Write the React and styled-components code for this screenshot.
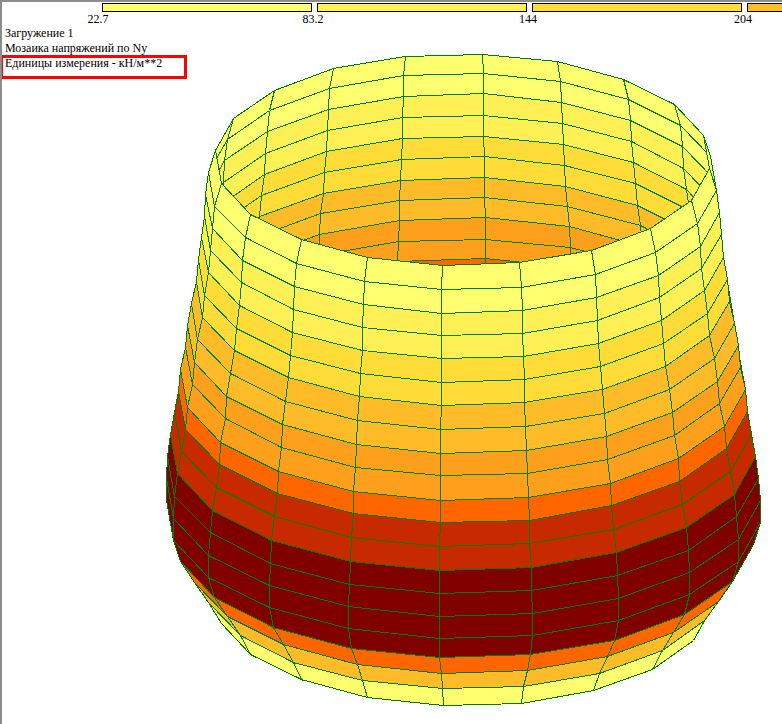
import React from 'react'
import styled, { createGlobalStyle } from 'styled-components'

const GlobalStyle = createGlobalStyle`
  html, body { margin: 0; padding: 0; background: #fff; }
`

const Y1 = '#ffff70'
const Y2 = '#fff055'
const GOLD = '#ffdc38'
const AMBER = '#ffbc28'
const ORANGE = '#ffa01c'
const HOT = '#ff6600'
const RED = '#c82a00'
const DARK = '#800000'

// colour of each ring of elements, top to bottom
const BANDS = [Y1, Y1, Y2, Y2, GOLD, GOLD, AMBER, AMBER, ORANGE, ORANGE, HOT, RED, RED, DARK, DARK, DARK, DARK, HOT, AMBER, Y1]
// shell radius of each ring, top one = 1
const RADII = [1, 1.028, 1.039, 1.046, 1.056, 1.07, 1.08, 1.1, 1.115, 1.123, 1.144, 1.151, 1.167, 1.185, 1.196, 1.203, 1.203, 1.175, 1.115, 1.056, 1.005]
const SIDES = 20

const project = (ring, side) => {
  const a = (side * 2 * Math.PI) / SIDES
  const s = RADII[ring]
  return [
    462 + 0.05 * ring + s * (-20 * Math.cos(a) - 247 * Math.sin(a)),
    159 + 22 * ring + s * (105.5 * Math.cos(a) - 9 * Math.sin(a)),
  ]
}

const buildFacets = () => {
  const list = []
  for (let r = 0; r < BANDS.length; r++) {
    for (let i = 0; i < SIDES; i++) {
      const corners = [project(r, i), project(r, i + 1), project(r + 1, i + 1), project(r + 1, i)]
      const mid = ((i + 0.5) * 2 * Math.PI) / SIDES
      list.push({
        key: `${r}-${i}`,
        fill: BANDS[r],
        depth: 223 * RADII[r] * Math.cos(mid) - 10.4 * r,
        points: corners.map(([x, y]) => `${Math.round(x) + 0.5},${Math.round(y) + 0.5}`).join(' '),
      })
    }
  }
  return list.sort((a, b) => a.depth - b.depth)
}

const Frame = styled.div`
  width: 780px;
  height: 722px;
  overflow: hidden;
  border-top: 2px solid #8c8c8c;
  border-left: 2px solid #8c8c8c;
  background: #fff;
  color: #000;
  font-family: "Liberation Serif", "Times New Roman", serif;
  font-size: 12px;
`

const LegendBars = styled.div`
  display: flex;
  gap: 5px;
  margin: 1px 0 0 100px;
  width: 680px;
  overflow: hidden;
`

const LegendBar = styled.div`
  flex: 0 0 210px;
  box-sizing: border-box;
  height: 9px;
  border: 1px solid #000;
  background: ${(p) => p.$color};
`

const LegendLabels = styled.div`
  display: flex;
  gap: 175px;
  margin-left: 76px;
  height: 14px;
  line-height: 14px;
`

const LegendLabel = styled.span`
  flex: 0 0 40px;
  text-align: center;
`

const Plot = styled.div`
  display: grid;
  position: relative;
  & > * { grid-area: 1 / 1; }
`

const Chart = styled.svg`
  display: block;
  width: 780px;
  height: 698px;
`

const Facet = styled.polygon`
  fill: ${(p) => p.$fill};
  stroke: #008000;
  stroke-width: 1;
  shape-rendering: crispEdges;
`

const Caption = styled.div`
  padding: 0 0 0 3px;
  align-self: start;
  z-index: 1;
`

const CaptionLine = styled.div`
  height: 15px;
  line-height: 15px;
  white-space: nowrap;
`

const Highlight = styled.div`
  position: absolute;
  left: -2px;
  top: 29px;
  width: 187px;
  height: 24px;
  box-sizing: border-box;
  border: 3px solid #ff0000;
  z-index: 2;
`

const App = () => {
  const facets = buildFacets()
  return (
    <Frame>
      <GlobalStyle />
      <LegendBars>
        <LegendBar $color={Y1} />
        <LegendBar $color={Y2} />
        <LegendBar $color={GOLD} />
        <LegendBar $color={AMBER} />
      </LegendBars>
      <LegendLabels>
        <LegendLabel>22.7</LegendLabel>
        <LegendLabel>83.2</LegendLabel>
        <LegendLabel>144</LegendLabel>
        <LegendLabel>204</LegendLabel>
      </LegendLabels>
      <Plot>
        <Chart viewBox="2 26 780 698">
          {facets.map((f) => (
            <Facet key={f.key} points={f.points} $fill={f.fill} />
          ))}
        </Chart>
        <Caption>
          <CaptionLine>Загружение 1</CaptionLine>
          <CaptionLine>Мозаика напряжений по Ny</CaptionLine>
          <CaptionLine>Единицы измерения - кН/м**2</CaptionLine>
        </Caption>
        <Highlight />
      </Plot>
    </Frame>
  )
}

export default App
